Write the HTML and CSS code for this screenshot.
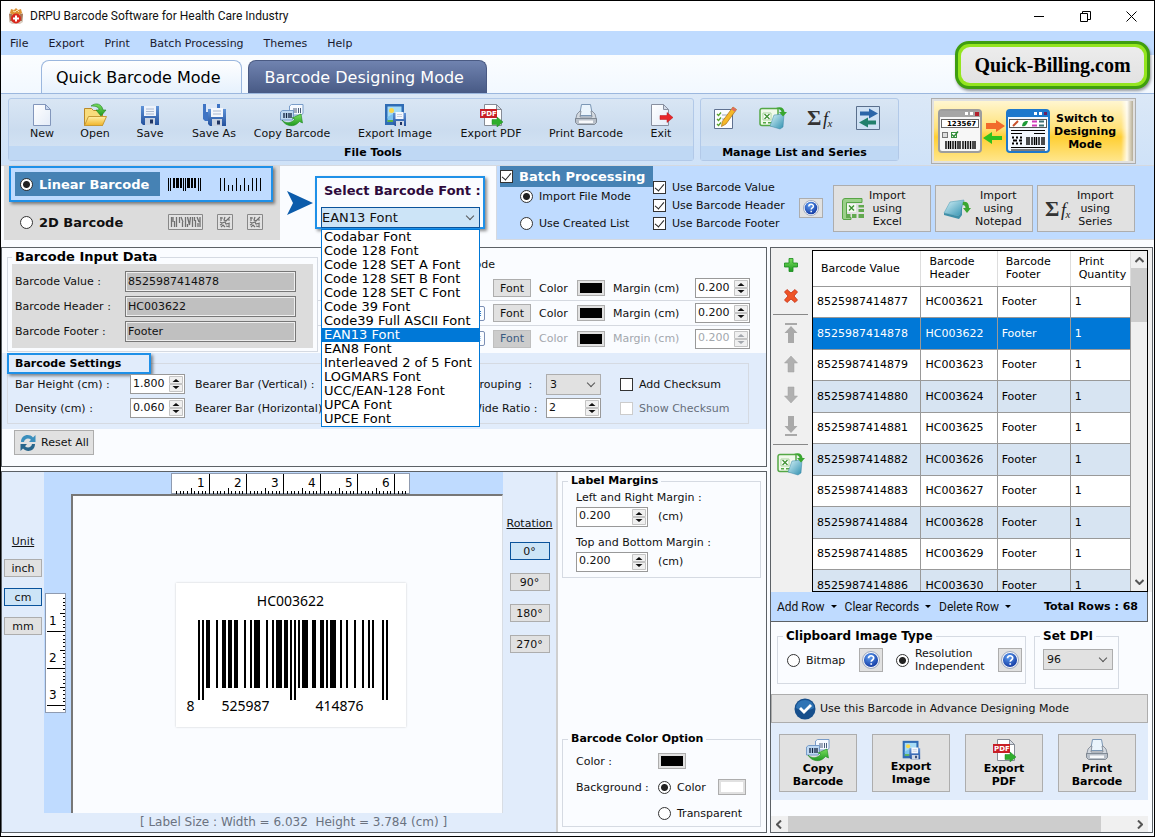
FILE: index.html
```html
<!DOCTYPE html>
<html lang="en">
<head>
    <meta charset="UTF-8">
    <meta name="viewport" content="width=device-width, initial-scale=1.0">
    <title>DRPU Barcode Software for Health Care Industry</title>
    <link rel="stylesheet" href="styles.css">
</head>
<body>
    <!-- Icon sprites -->
    <svg class="sprites" aria-hidden="true">
        <defs>
            <linearGradient id="g-blue" x1="0" y1="0" x2="0" y2="1"><stop offset="0" stop-color="#5f93d8"/><stop offset="1" stop-color="#24519c"/></linearGradient>
            <linearGradient id="g-green" x1="0" y1="0" x2="0" y2="1"><stop offset="0" stop-color="#7ade5c"/><stop offset="1" stop-color="#1f9a22"/></linearGradient>
            <linearGradient id="g-folder" x1="0" y1="0" x2="0" y2="1"><stop offset="0" stop-color="#fff0a8"/><stop offset="1" stop-color="#f0b429"/></linearGradient>
            <linearGradient id="g-page" x1="0" y1="0" x2="1" y2="1"><stop offset="0" stop-color="#ffffff"/><stop offset="1" stop-color="#e4ecf8"/></linearGradient>
            <linearGradient id="g-pad" x1="0" y1="0" x2="1" y2="1"><stop offset="0" stop-color="#d8f3f8"/><stop offset="1" stop-color="#2f90b0"/></linearGradient>
            <radialGradient id="g-help" cx=".4" cy=".3" r=".8"><stop offset="0" stop-color="#5d9cf0"/><stop offset="1" stop-color="#0b2f9a"/></radialGradient>
        </defs>
        <symbol id="i-app" viewBox="0 0 16 16">
            <path d="M1 5l2-1h10l2 1v9l-3 2H4l-3-2z" fill="#d9cfc4"/>
            <path d="M3 1l3 1 2-2 2 2 3-1 1 4-3 2H5L2 5z" fill="#dd9234"/>
            <path d="M5 3l2 1 2-2 2 2" fill="none" stroke="#fbe3b0"/>
            <path d="M1 6h3v7H2zM12 6h3l-1 7h-2z" fill="#a9795a"/>
            <circle cx="8" cy="10.500" r="5" fill="#d9261c"/>
            <path d="M7 7.500h2v2h2v2H9v2H7v-2H5v-2h2z" fill="#fff"/>
        </symbol>
        <symbol id="i-new" viewBox="0 0 24 24">
            <path d="M3.500 1.500h12l5 5v16h-17z" fill="url(#g-page)" stroke="#8296bb"/>
            <path d="M15.500 1.500v5h5z" fill="#c9d8ef" stroke="#8296bb"/>
        </symbol>
        <symbol id="i-open" viewBox="0 0 24 24">
            <path d="M1.500 5.500h7l2 2h9v15h-18z" fill="#f8dc7c" stroke="#b9892a"/>
            <path d="M5.500 13.500h18l-4 9h-18z" fill="url(#g-folder)" stroke="#c79a35"/>
            <path d="M8 3c5-4 11-2 12 4h3l-5 6-5-6h3c0-3-3-4-8-4z" fill="url(#g-green)" stroke="#1c7f1e" stroke-width=".6"/>
        </symbol>
        <symbol id="i-save" viewBox="0 0 24 24">
            <path d="M3 3h18v19H5l-2-2z" fill="url(#g-blue)"/>
            <path d="M6 3h12v10H6z" fill="#eef3fb"/>
            <path d="M8 6h8M8 8.500h8M8 11h8" stroke="#a9b8d0"/>
            <path d="M7 15h10v7H7z" fill="#c9d3e2"/>
            <path d="M12 16.500h3v4h-3z" fill="#1f3463"/>
        </symbol>
        <symbol id="i-saveas" viewBox="0 0 24 24">
            <path d="M1 1h17v17H3l-2-2z" fill="#3f74c4"/>
            <path d="M4 1h11v8H4z" fill="#dce7f7"/>
            <path d="M6 6h18v17H8l-2-2z" fill="url(#g-blue)"/>
            <path d="M9 5h12v9H9z" fill="#f4f7fc"/>
            <path d="M11 8h8M11 11h8" stroke="#a9b8d0"/>
            <path d="M10 16h10v7H10z" fill="#c9d3e2"/>
            <path d="M15 17.500h3v4h-3z" fill="#1f3463"/>
        </symbol>
        <symbol id="i-copy" viewBox="0 0 24 24">
            <path d="M9.500 3l2-1.500h11.500v9l-2 1.500h-11.500z" fill="#f5f9ff" stroke="#6c93c4" stroke-width=".9"/>
            <path d="M14 5v5M16 5v5M18.500 5v5M20.500 5v5" stroke="#4a5d7a"/>
            <path d="M.5 9l2-1.500h11v8l-1.500 1.500h-11.500z" fill="#bed8f2" stroke="#6c93c4" stroke-width=".9"/>
            <path d="M4 10v5M6.500 10v5M9 10v5M11 10v5" stroke="#12233f" stroke-width="1.300"/>
            <path d="M2 17c3 3.500 9 4 13-1l-3-1 9-4 1.500 9-3-1.500c-5 6.500-14 5-17.500-1.500z" fill="url(#g-green)" stroke="#1c8a20" stroke-width=".6"/>
        </symbol>
        <symbol id="i-image" viewBox="0 0 24 24">
            <path d="M2 1h19v21H2z" fill="#2f6cb5"/>
            <path d="M4.500 3.500h14v12h-14z" fill="#a6dcf6"/>
            <circle cx="8.500" cy="7.500" r="2.500" fill="#f9d84a"/>
            <path d="M4.500 19v-5l5-3 3 4v4z" fill="#7cc4ee"/>
            <path d="M4.500 19v-2h6v2z" fill="#5eb247"/>
            <path d="M10 10h13v13H12l-2-2z" fill="url(#g-blue)"/>
            <path d="M12.500 9h8v7h-8z" fill="#f5f8fd"/>
            <path d="M14 11.500h5M14 13.500h5" stroke="#b9c4d6" stroke-width=".8"/>
            <path d="M13 18h8v5h-8z" fill="#cfd8e6"/>
            <path d="M17 19h2v3h-2z" fill="#1f3463"/>
        </symbol>
        <symbol id="i-pdf" viewBox="0 0 24 24">
            <path d="M5.500 1.500h12l5 5v16h-17z" fill="#fff" stroke="#868c96"/>
            <path d="M17.500 1.500v5h5z" fill="#d8dde5" stroke="#868c96"/>
            <path d="M1 6h17v9H1z" fill="#c81f26"/>
            <path d="M13 16.500h5v-2.500l6 5-6 5v-2.500h-5z" fill="#2fae2c" stroke="#1b8420" stroke-width=".5"/>
        </symbol>
        <symbol id="i-print" viewBox="0 0 24 24">
            <path d="M7.500 1.500h9l2 11h-13z" fill="#eaf4fc" stroke="#7b97b5"/>
            <path d="M3 11l3-3h1l-1 6h12l-1-6h1l3 3 1.500 6H1.500z" fill="#d3d9e0" stroke="#79828e" stroke-width=".8"/>
            <path d="M1.500 15.500h21v4l-2 2h-17l-2-2z" fill="#b9c0c9" stroke="#6f7884" stroke-width=".8"/>
            <path d="M5 17.500h14v2.500H5z" fill="#f7f9fb"/>
        </symbol>
        <symbol id="i-exit" viewBox="0 0 24 24">
            <path d="M2.500 1.500h12l5 5v16h-17z" fill="url(#g-page)" stroke="#8890a0"/>
            <path d="M14.500 1.500v5h5z" fill="#d3dbe8" stroke="#8890a0"/>
            <path d="M11 12.500h7V9.500l6 5-6 5v-3h-7z" fill="#e8262a" stroke="#b51519" stroke-width=".5"/>
        </symbol>
        <symbol id="i-edit" viewBox="0 0 24 24">
            <path d="M1.500 3.500h18v19h-18z" fill="#fbfcff" stroke="#5f7190"/>
            <path d="M4 8l1.500 1.500L8 6.500M4 13l1.500 1.500L8 11.500M4 18l1.500 1.500L8 16.500" fill="none" stroke="#58a32c" stroke-width="1.300"/>
            <path d="M9 9h6M9 13h3" stroke="#9aa6ba"/>
            <path d="M20 1l3.500 2.500L13 18l-4.500 2.500.8-5z" fill="#f5b829" stroke="#a7701a" stroke-width=".7"/>
            <path d="M20 1l3.500 2.500-1.700 2.300-3.500-2.500z" fill="#e06c5e"/>
        </symbol>
        <symbol id="i-xlpad" viewBox="0 0 28 24">
            <path d="M3 2.500h16v17H3a2 2 0 0 1-2-2v-13a2 2 0 0 1 2-2z" fill="#f0f9ea" stroke="#54a845" stroke-width="1.500"/>
            <path d="M4 7h8v7H4z" fill="#fff" stroke="#8cc77d" stroke-width=".7"/>
            <path d="M5.500 8l5 5M10.500 8l-5 5" stroke="#3f9232" stroke-width="1.300"/>
            <path d="M4 16.800h3M9 16.800h4" stroke="#54a845" stroke-width="1.600"/>
            <path d="M15 9l10-1-1 13-3 2-10-3z" fill="url(#g-pad)" stroke="#3a86a5" stroke-width=".5"/>
            <path d="M17 2c5-2 8 0 8.500 4h2.500l-4 4.500-4-4.500h2.500c0-2-2-3-5.500-4z" fill="#3aa62f"/>
        </symbol>
        <symbol id="i-swap" viewBox="0 0 24 24">
            <path d="M.5.5h23v23H.5z" fill="#cfe1f4" stroke="#5a6f8c"/>
            <path d="M4 5.500h9V2.500l9 5-9 5v-3H4z" fill="#2b65a8"/>
            <path d="M20 14.500h-8v-3l-9 5 9 5v-3h8z" fill="#22806c"/>
        </symbol>
        <symbol id="i-help" viewBox="0 0 16 16">
            <circle cx="8" cy="8" r="7.500" fill="#fff" stroke="#8d9bb5" stroke-width=".8"/>
            <circle cx="8" cy="8" r="6.300" fill="url(#g-help)"/>
            <path d="M5.800 6.500c0-3 4.600-3 4.600-.2 0 1.700-2.200 1.600-2.200 3.200M8.200 10.800v1.500" fill="none" stroke="#fff" stroke-width="1.500"/>
        </symbol>
        <symbol id="i-excel" viewBox="0 0 24 24">
            <path d="M4 1.500h17v4H5.500v15H10v2H3a1.500 1.500 0 0 1-1.500-1.500V4A2.500 2.500 0 0 1 4 1.500z" fill="#9bd089" stroke="#57a546"/>
            <path d="M6 7h9v8H6z" fill="#f3faef"/>
            <path d="M8 8.500l5 5M13 8.500l-5 5" stroke="#3c8f2f" stroke-width="1.400"/>
            <path d="M5 17h4.500v4H5zM11 17h4.500v4H11zM17.500 17H23v4h-5.500zM17.500 12H23v3h-5.500zM17.500 8H23v2.500h-5.500z" fill="#62a94f"/>
        </symbol>
        <symbol id="i-notepad" viewBox="0 0 28 24">
            <path d="M7 5l14-2-4 14-2 2-14-3z" fill="url(#g-pad)" stroke="#5aa5bb" stroke-width=".6"/>
            <path d="M1 16l14 3 2-2 2-9v10l-3 4-15-4z" fill="#3f8fa8"/>
            <path d="M20 5c5-1 6 3 6 6h2l-4 5-4-5h2.500c0-2-1-3-3-3z" fill="#3aa62f"/>
        </symbol>
        <symbol id="i-reset" viewBox="0 0 18 18">
            <path d="M2 8c0-7 8-9 12-4.500L16.500 1v7H10l2-2.200C9.500 3.500 5.500 4.500 5 8z" fill="#3b8fbd"/>
            <path d="M16 10c0 7-8 9-12 4.500L1.500 17v-7H8l-2 2.200c2.500 2.300 6.500 1.300 7-2.200z" fill="#28668c"/>
        </symbol>
        <symbol id="i-plus" viewBox="0 0 16 16"><path d="M6 1.500h4V6h4.500v4H10v4.500H6V10H1.500V6H6z" fill="url(#g-green)" stroke="#168a1c" stroke-width=".8"/></symbol>
        <symbol id="i-cross" viewBox="0 0 16 16"><path d="M4 1.500L8 5l4-3.500L14.500 4 11 8l3.500 4-2.500 2.500L8 11l-4 3.500L1.500 12 5 8 1.500 4z" fill="#ef5427" stroke="#c42f14" stroke-width=".8"/></symbol>
        <symbol id="i-up" viewBox="0 0 16 20"><path d="M8 2l6.500 7h-3.500v9H5V9H1.500z" fill="#b0b0b0" stroke="#a0a0a0" stroke-width=".5"/></symbol>
        <symbol id="i-top" viewBox="0 0 16 20"><path d="M2 0h12v2H2zM8 3l6.500 7h-3.500v10H5V10H1.500z" fill="#a9a9a9"/></symbol>
        <symbol id="i-down" viewBox="0 0 16 20"><path d="M8 18l6.500-7h-3.500V2H5v9H1.500z" fill="#b0b0b0" stroke="#a0a0a0" stroke-width=".5"/></symbol>
        <symbol id="i-bottom" viewBox="0 0 16 20"><path d="M2 18h12v2H2zM8 17l6.500-7h-3.500V0H5v10H1.500z" fill="#a9a9a9"/></symbol>
        <symbol id="i-check" viewBox="0 0 22 22">
            <circle cx="11" cy="11" r="10.500" fill="#174f8c"/>
            <path d="M2 10a9 8 0 0 1 18 0c-5 3-13 3-18 0z" fill="#2f74b5"/>
            <path d="M5 11l2-2 3 3 6-6 2 2-8 8z" fill="#fff"/>
        </symbol>
        <symbol id="i-spin" viewBox="0 0 14 16">
            <path d="M.5.5h13v7H.5zM.5 8.500h13v7H.5z" fill="#f0f0f0" stroke="#c4c4c4"/>
            <path d="M7 3l3.500 3h-7zM7 13l3.500-3h-7z" fill="currentColor"/>
        </symbol>
        <symbol id="i-linear1" viewBox="0 0 34 13"><path d="M0 0h1v13H0zM2 0h1v13H2zM5 0h2v10H5zM8 0h3v10H8zM12 0h2v10h-2zM15 0h1v13h-1zM17 0h1v13h-1zM19 0h3v10h-3zM23 0h2v10h-2zM26 0h2v10h-2zM30 0h1v13h-1zM32 0h1v13h-1z" fill="#000"/></symbol>
        <symbol id="i-linear2" viewBox="0 0 42 13"><path d="M0 0h1v13H0zM4 0h1v13H4zM8 7h1v6H8zM12 7h1v6h-1zM16 0h1v13h-1zM20 7h1v6h-1zM24 0h1v13h-1zM28 7h1v6h-1zM32 0h1v13h-1zM36 0h1v13h-1zM40 0h1v13h-1z" fill="#000"/></symbol>
        <symbol id="i-pdf417" viewBox="0 0 35 16">
            <path d="M.5.5h34v15H.5z" fill="#e2e2e2" stroke="#888"/>
            <path d="M3.500 3v10M5 3v5M6.500 7v6M8.500 3v10M11.500 3v6M13 3l2 5M14.500 8v5M17.500 3v10M19.500 3l2 8 1-8M19.500 10v3M24.500 3v10M26.500 3v4M27.500 6v7M29 3l2 5M30 9v4M32 3v10" stroke="#707070" fill="none" stroke-width="1.300"/>
        </symbol>
        <symbol id="i-qr" viewBox="0 0 16 16">
            <path d="M.5.5h15v15H.5z" fill="#e2e2e2" stroke="#888"/>
            <path d="M3 4h3M4 3v4M8 3l-1 3 2 1 4-4M11 6h2M3 8l2 1 3-1 1 2 4-1M3 11l2-1M4 13l2-2 2 2M9 12l4 1M12 10v2" fill="none" stroke="#707070" stroke-width="1.200"/>
        </symbol>
        <symbol id="i-switch" viewBox="0 0 112 44">
            <rect x="1" y="1" width="42" height="42" rx="3" fill="#f7f7f7" stroke="#9d9d9d" stroke-width="2"/>
            <path d="M2 2h40v6H2z" fill="#a5a5a5"/>
            <path d="M27 3h3v3h-3zM32 3h3v3h-3z" fill="#fff"/><path d="M37 3h4v4h-4z" fill="#b3202c"/>
            <rect x="3.500" y="10.500" width="37" height="8" fill="#fff" stroke="#666"/>
            <rect x="4.500" y="23.500" width="5" height="5" fill="#ddd" stroke="#777"/>
            <rect x="13.500" y="23.500" width="5" height="5" fill="#fff" stroke="#398f3f"/>
            <path d="M14 25.500l2 2 4-5" stroke="#2a8a34" stroke-width="1.500" fill="none"/>
            <path d="M8 32v8M10.500 32v8M12.500 32v8M15 32v8M17.500 32v8M20 32v8M22 32v8M25 32v8M27.500 32v8M30 32v8M32.500 32v8M35 32v8M37 32v8" stroke="#000" stroke-width="1.400"/>
            <path d="M48 14h10v-3l9 6-9 6v-3H48z" fill="#f26a2a"/>
            <path d="M64 27H54v-4l-9 6 9 6v-4h10z" fill="#2fc01e"/>
            <rect x="69" y="1" width="42" height="42" rx="3" fill="#f2f7fd" stroke="#1e78cc" stroke-width="2"/>
            <path d="M70 2h40v6H70z" fill="#1e78cc"/>
            <path d="M96 3h3v3h-3zM101 3h3v3h-3z" fill="#fff"/><path d="M106 3h3v3h-3z" fill="#6b1e5d"/>
            <rect x="71.500" y="10.500" width="37" height="8" fill="#fff" stroke="#555"/>
            <path d="M75 17l5-5" stroke="#c8512c" stroke-width="2"/><path d="M84 17c1-5 3-5 6-5-1 4-3 6-6 5z" fill="#1e9b37"/>
            <path d="M94 12.500h5M94 16.500h5" stroke="#d13ab9" stroke-width="2"/><path d="M101 12.500h5M101 16.500h5" stroke="#3b6f72" stroke-width="2"/>
            <path d="M73 21.500h34M73 24.500h11M96 24.500h11M73 38.500h34M73 41h34" stroke="#000"/>
            <path d="M74 28.500h2M78 28.500h2M82 28.500h2M75 31.500h4M81 31.500h3M74 34.500h2M78 34.500h2M82 34.500h2" stroke="#000" stroke-width="2"/>
            <path d="M89 28v8M91 28v8M94 28v8M96.500 28v8M98.500 28v8M101 28v8M104 28v8M106 28v8" stroke="#000" stroke-width="1.400"/>
        </symbol>
    </svg>

    <div class="window">
        <!-- Title bar -->
        <header class="title-bar">
            <svg class="icon-16"><use href="#i-app"/></svg>
            <span class="title">DRPU Barcode Software for Health Care Industry</span>
            <button class="win-btn" aria-label="Minimize"><svg width="11" height="11"><path d="M0 5.500h10" stroke="#000"/></svg></button>
            <button class="win-btn" aria-label="Restore"><svg width="11" height="11"><path d="M.5 2.500h7v8h-7zM2.500 2.500v-2h8v8h-3" stroke="#000" fill="none"/></svg></button>
            <button class="win-btn" aria-label="Close"><svg width="11" height="11"><path d="M.5.5l10 10M10.500.5l-10 10" stroke="#000"/></svg></button>
        </header>

        <!-- Menu -->
        <nav class="menu-bar">
            <a href="#">File</a>
            <a href="#">Export</a>
            <a href="#">Print</a>
            <a href="#">Batch Processing</a>
            <a href="#">Themes</a>
            <a href="#">Help</a>
        </nav>
        <div class="site-badge"><span>Quick-Billing.com</span></div>

        <!-- Mode tabs -->
        <div class="tabs">
            <button class="tab active">Quick Barcode Mode</button>
            <button class="tab">Barcode Designing Mode</button>
        </div>

        <!-- Ribbon -->
        <div class="ribbon">
            <section class="group file-tools">
                <div class="tools">
                    <button class="tool"><svg class="icon-24"><use href="#i-new"/></svg>New</button>
                    <button class="tool"><svg class="icon-24"><use href="#i-open"/></svg>Open</button>
                    <button class="tool"><svg class="icon-24"><use href="#i-save"/></svg>Save</button>
                    <button class="tool"><svg class="icon-24"><use href="#i-saveas"/></svg>Save As</button>
                    <button class="tool"><svg class="icon-24"><use href="#i-copy"/></svg>Copy Barcode</button>
                    <button class="tool"><svg class="icon-24"><use href="#i-image"/></svg>Export Image</button>
                    <button class="tool"><svg class="icon-24"><use href="#i-pdf"/><text x="2" y="13" class="pdf-text">PDF</text></svg>Export PDF</button>
                    <button class="tool"><svg class="icon-24"><use href="#i-print"/></svg>Print Barcode</button>
                    <button class="tool"><svg class="icon-24"><use href="#i-exit"/></svg>Exit</button>
                </div>
                <h2 class="group-title">File Tools</h2>
            </section>
            <section class="group list-tools">
                <div class="tools">
                    <button class="tool" aria-label="Edit list"><svg class="icon-24"><use href="#i-edit"/></svg></button>
                    <button class="tool" aria-label="Import list"><svg class="icon-28"><use href="#i-xlpad"/></svg></button>
                    <button class="tool" aria-label="Series"><svg class="icon-28"><text x="1" y="19" class="sigma">Σ</text><text x="17" y="19" class="fx">fₓ</text></svg></button>
                    <button class="tool" aria-label="Swap"><svg class="icon-24"><use href="#i-swap"/></svg></button>
                </div>
                <h2 class="group-title">Manage List and Series</h2>
            </section>
            <button class="switch-btn">
                <span class="switch-face">
                    <svg class="switch-icon"><use href="#i-switch"/><text x="9" y="17" class="mini-text">123567</text></svg>
                    <span>Switch to<br>Designing<br>Mode</span>
                </span>
            </button>
        </div>

        <!-- Barcode type, font and batch options -->
        <div class="options">
            <div class="barcode-type">
                <div class="type-row selected">
                    <label class="type-label"><input type="radio" name="type" checked>Linear Barcode</label>
                    <svg width="34" height="13"><use href="#i-linear1"/></svg>
                    <svg width="42" height="13"><use href="#i-linear2"/></svg>
                </div>
                <div class="type-row">
                    <label class="type-label"><input type="radio" name="type">2D Barcode</label>
                    <svg width="35" height="16"><use href="#i-pdf417"/></svg>
                    <svg width="16" height="16"><use href="#i-qr"/></svg>
                    <svg width="16" height="16"><use href="#i-qr"/></svg>
                </div>
            </div>

            <div class="font-choice">
                <svg width="26" height="24" viewBox="0 0 26 24"><path d="M0 0l26 12L0 24l6-12z" fill="#0c5cab"/></svg>
                <div class="font-box">
                    <label for="font-select">Select Barcode Font :</label>
                    <span class="select-wrap">
                        <select id="font-select" class="open"><option>EAN13 Font</option></select>
                    </span>
                    <ul class="font-list" role="listbox">
                        <li>Codabar Font</li>
                        <li>Code 128 Font</li>
                        <li>Code 128 SET A Font</li>
                        <li>Code 128 SET B Font</li>
                        <li>Code 128 SET C Font</li>
                        <li>Code 39 Font</li>
                        <li>Code39 Full ASCII Font</li>
                        <li class="current">EAN13 Font</li>
                        <li>EAN8 Font</li>
                        <li>Interleaved 2 of 5 Font</li>
                        <li>LOGMARS Font</li>
                        <li>UCC/EAN-128 Font</li>
                        <li>UPCA Font</li>
                        <li>UPCE Font</li>
                    </ul>
                </div>
            </div>

            <div class="batch">
                <div class="batch-mode">
                    <label class="batch-title"><input type="checkbox" checked>Batch Processing</label>
                    <label class="mode"><input type="radio" name="mode" checked>Import File Mode</label>
                    <label class="mode"><input type="radio" name="mode">Use Created List</label>
                </div>
                <div class="batch-use">
                    <label><input type="checkbox" checked>Use Barcode Value</label>
                    <label><input type="checkbox" checked>Use Barcode Header</label>
                    <label><input type="checkbox" checked>Use Barcode Footer</label>
                </div>
                <button class="btn help-btn" aria-label="Help"><svg class="icon-16"><use href="#i-help"/></svg></button>
                <div class="imports">
                    <button class="btn import-btn"><svg class="icon-24"><use href="#i-excel"/></svg><span>Import<br>using<br>Excel</span></button>
                    <button class="btn import-btn"><svg class="icon-28"><use href="#i-notepad"/></svg><span>Import<br>using<br>Notepad</span></button>
                    <button class="btn import-btn"><svg class="icon-28"><text x="0" y="19" class="sigma">Σ</text><text x="16" y="19" class="fx">fₓ</text></svg><span>Import<br>using<br>Series</span></button>
                </div>
            </div>
        </div>

        <main class="workspace">
            <div class="left">
                <section class="panel data-panel">
                    <div class="data-top">
                        <fieldset class="input-data">
                            <legend class="big">Barcode Input Data</legend>
                            <div class="fields">
                                <label for="val">Barcode Value :</label><input id="val" type="text" value="8525987414878">
                                <label for="head">Barcode Header :</label><input id="head" type="text" value="HC003622">
                                <label for="foot">Barcode Footer :</label><input id="foot" type="text" value="Footer">
                            </div>
                        </fieldset>
                        <div class="text-styles">
                            <div class="style-title">Barcode</div>
                            <div class="style-row">
                                <span></span>
                                <button class="btn">Font</button><label for="c1">Color</label><button class="swatch" id="c1"><i></i></button>
                                <label for="m1">Margin (cm)</label><span class="spinner"><input id="m1" type="text" value="0.200"><svg><use href="#i-spin"/></svg></span>
                            </div>
                            <div class="style-row">
                                <button class="align-btn" aria-label="Alignment">≡</button>
                                <button class="btn">Font</button><label for="c2">Color</label><button class="swatch" id="c2"><i></i></button>
                                <label for="m2">Margin (cm)</label><span class="spinner"><input id="m2" type="text" value="0.200"><svg><use href="#i-spin"/></svg></span>
                            </div>
                            <div class="style-row disabled">
                                <button class="align-btn" aria-label="Alignment">≡</button>
                                <button class="btn">Font</button><label for="c3">Color</label><button class="swatch" id="c3"><i></i></button>
                                <label for="m3">Margin (cm)</label><span class="spinner"><input id="m3" type="text" value="0.200"><svg><use href="#i-spin"/></svg></span>
                            </div>
                        </div>
                    </div>
                    <div class="settings">
                        <fieldset>
                            <legend class="marked">Barcode Settings</legend>
                            <div class="settings-grid">
                                <label for="bh">Bar Height (cm) :</label>
                                <span class="spinner"><input id="bh" type="text" value="1.800"><svg><use href="#i-spin"/></svg></span>
                                <span>Bearer Bar (Vertical) :</span>
                                <label for="grp">Grouping &nbsp;:</label>
                                <span class="select-wrap"><select id="grp"><option>3</option></select></span>
                                <label><input type="checkbox">Add Checksum</label>
                                <label for="den">Density (cm) :</label>
                                <span class="spinner"><input id="den" type="text" value="0.060"><svg><use href="#i-spin"/></svg></span>
                                <span>Bearer Bar (Horizontal) :</span>
                                <label for="wr">Wide Ratio :</label>
                                <span class="spinner"><input id="wr" type="text" value="2"><svg><use href="#i-spin"/></svg></span>
                                <label class="muted"><input type="checkbox" disabled>Show Checksum</label>
                            </div>
                        </fieldset>
                    </div>
                    <button class="btn reset-btn"><svg width="18" height="18"><use href="#i-reset"/></svg>Reset All</button>
                </section>

                <section class="panel design-panel">
                    <div class="units">
                        <u>Unit</u>
                        <button class="btn">inch</button>
                        <button class="btn on">cm</button>
                        <button class="btn">mm</button>
                    </div>
                    <div class="stage">
                        <div class="ruler-top">
                            <svg width="239" height="21">
                                <defs>
                                    <pattern id="ticks-h" x="1" y="0" width="37" height="21" patternUnits="userSpaceOnUse">
                                        <path d="M4 18v3M8 18v3M11 18v3M15 18v3M19 15v6M22 18v3M26 18v3M30 18v3M33 18v3" transform="translate(.5 0)" stroke="#000"/>
                                        <path d="M0.500 1v20" stroke="#000"/>
                                    </pattern>
                                </defs>
                                <rect x=".5" y=".5" width="238" height="20" fill="#fff" stroke="#8f9bb0"/>
                                <rect x="2" y="0" width="236" height="21" fill="url(#ticks-h)"/>
                                <g class="ruler-text"><text x="26" y="14">1</text><text x="63" y="14">2</text><text x="100" y="14">3</text><text x="137" y="14">4</text><text x="174" y="14">5</text><text x="211" y="14">6</text></g>
                            </svg>
                        </div>
                        <div class="ruler-side">
                            <svg width="21" height="120">
                                <defs>
                                    <pattern id="ticks-v" x="0" y="1" width="21" height="37" patternUnits="userSpaceOnUse">
                                        <path d="M18 4h3M18 8h3M18 11h3M18 15h3M15 19h6M18 22h3M18 26h3M18 30h3M18 33h3" transform="translate(0 .5)" stroke="#000"/>
                                        <path d="M2 .5h19" stroke="#000"/>
                                    </pattern>
                                </defs>
                                <rect x=".5" y=".5" width="20" height="119" fill="#fff" stroke="#8f9bb0"/>
                                <rect x="0" y="2" width="20" height="117" fill="url(#ticks-v)"/>
                                <g class="ruler-text"><text x="4" y="32">1</text><text x="4" y="69">2</text><text x="4" y="106">3</text></g>
                            </svg>
                        </div>
                        <div class="canvas">
                            <div class="label-card">
                                <div class="label-head">HC003622</div>
                                <svg id="barcode" class="bars" width="190" height="80" role="img" aria-label="8525987414876"></svg>
                                <div class="digits"><span>8</span><span>525987</span><span>414876</span></div>
                            </div>
                        </div>
                        <div class="label-size">[ Label Size : Width = 6.032 &nbsp;Height = 3.784 (cm) ]</div>
                    </div>
                    <div class="rotation">
                        <u>Rotation</u>
                        <button class="btn on">0°</button>
                        <button class="btn">90°</button>
                        <button class="btn">180°</button>
                        <button class="btn">270°</button>
                    </div>
                    <div class="label-options">
                        <fieldset>
                            <legend>Label Margins</legend>
                            <div class="margins">
                                <label for="lr">Left and Right Margin :</label>
                                <div class="margin-row"><span class="spinner"><input id="lr" type="text" value="0.200"><svg><use href="#i-spin"/></svg></span>(cm)</div>
                                <label for="tb">Top and Bottom Margin :</label>
                                <div class="margin-row"><span class="spinner"><input id="tb" type="text" value="0.200"><svg><use href="#i-spin"/></svg></span>(cm)</div>
                            </div>
                        </fieldset>
                        <fieldset>
                            <legend>Barcode Color Option</legend>
                            <div class="color-grid">
                                <label for="bc">Color :</label>
                                <button class="swatch" id="bc"><i></i></button>
                                <span></span>
                                <span>Background :</span>
                                <label><input type="radio" name="bg" checked>Color</label>
                                <button class="swatch white" aria-label="Background color"><i></i></button>
                                <span></span>
                                <label class="wide"><input type="radio" name="bg">Transparent</label>
                            </div>
                        </fieldset>
                    </div>
                </section>
            </div>

            <section class="panel list-panel">
                <div class="list-area">
                    <div class="list-tools-side">
                        <button aria-label="Add"><svg width="16" height="16"><use href="#i-plus"/></svg></button>
                        <button aria-label="Delete"><svg width="16" height="16"><use href="#i-cross"/></svg></button>
                        <hr>
                        <button aria-label="Move to top"><svg width="16" height="20"><use href="#i-top"/></svg></button>
                        <button aria-label="Move up"><svg width="16" height="20"><use href="#i-up"/></svg></button>
                        <button aria-label="Move down"><svg width="16" height="20"><use href="#i-down"/></svg></button>
                        <button aria-label="Move to bottom"><svg width="16" height="20"><use href="#i-bottom"/></svg></button>
                        <hr>
                        <button aria-label="Import list"><svg class="icon-28"><use href="#i-xlpad"/></svg></button>
                    </div>
                    <div class="table-box">
                        <div class="table-clip">
                            <table>
                                <thead>
                                    <tr><th>Barcode Value</th><th>Barcode Header</th><th>Barcode Footer</th><th>Print Quantity</th></tr>
                                </thead>
                                <tbody>
                                    <tr><td>8525987414877</td><td>HC003621</td><td>Footer</td><td>1</td></tr>
                                    <tr class="selected"><td>8525987414878</td><td>HC003622</td><td>Footer</td><td>1</td></tr>
                                    <tr><td>8525987414879</td><td>HC003623</td><td>Footer</td><td>1</td></tr>
                                    <tr><td>8525987414880</td><td>HC003624</td><td>Footer</td><td>1</td></tr>
                                    <tr><td>8525987414881</td><td>HC003625</td><td>Footer</td><td>1</td></tr>
                                    <tr><td>8525987414882</td><td>HC003626</td><td>Footer</td><td>1</td></tr>
                                    <tr><td>8525987414883</td><td>HC003627</td><td>Footer</td><td>1</td></tr>
                                    <tr><td>8525987414884</td><td>HC003628</td><td>Footer</td><td>1</td></tr>
                                    <tr><td>8525987414885</td><td>HC003629</td><td>Footer</td><td>1</td></tr>
                                    <tr><td>8525987414886</td><td>HC003630</td><td>Footer</td><td>1</td></tr>
                                </tbody>
                            </table>
                        </div>
                        <div class="scroll-v">
                            <svg width="9" height="6"><path d="M.5 5l4-4 4 4" fill="none" stroke="#555" stroke-width="2"/></svg>
                            <span class="thumb"></span>
                            <svg width="9" height="6"><path d="M.5 1l4 4 4-4" fill="none" stroke="#555" stroke-width="2"/></svg>
                        </div>
                    </div>
                </div>
                <div class="row-bar">
                    <button class="row-menu">Add Row</button>
                    <button class="row-menu">Clear Records</button>
                    <button class="row-menu">Delete Row</button>
                    <span class="total">Total Rows : 68</span>
                </div>
                <div class="output-options">
                    <fieldset class="clip-type">
                        <legend class="mid">Clipboard Image Type</legend>
                        <div class="clip-row">
                            <label><input type="radio" name="clip">Bitmap</label>
                            <button class="btn help-btn" aria-label="Bitmap help"><svg width="18" height="18"><use href="#i-help"/></svg></button>
                            <label><input type="radio" name="clip" checked><span>Resolution<br>Independent</span></label>
                            <button class="btn help-btn" aria-label="Resolution help"><svg width="18" height="18"><use href="#i-help"/></svg></button>
                        </div>
                    </fieldset>
                    <fieldset class="dpi">
                        <legend class="mid">Set DPI</legend>
                        <span class="select-wrap"><select aria-label="Set DPI"><option>96</option></select></span>
                    </fieldset>
                </div>
                <button class="btn advance-btn"><svg width="22" height="22"><use href="#i-check"/></svg>Use this Barcode in Advance Designing Mode</button>
                <div class="output-buttons">
                    <button class="btn out-btn"><svg class="icon-24"><use href="#i-copy"/></svg>Copy<br>Barcode</button>
                    <button class="btn out-btn"><svg class="icon-20"><use href="#i-image"/></svg>Export<br>Image</button>
                    <button class="btn out-btn"><svg class="icon-24"><use href="#i-pdf"/><text x="2" y="13" class="pdf-text">PDF</text></svg>Export<br>PDF</button>
                    <button class="btn out-btn"><svg class="icon-24"><use href="#i-print"/></svg>Print<br>Barcode</button>
                </div>
                <div class="scroll-h">
                    <svg width="6" height="9"><path d="M5 .5l-4 4 4 4" fill="none" stroke="#555" stroke-width="2"/></svg>
                    <span class="thumb"></span>
                    <svg width="6" height="9"><path d="M1 .5l4 4-4 4" fill="none" stroke="#555" stroke-width="2"/></svg>
                </div>
            </section>
        </main>
    </div>

    <script src="barcode.js"></script>
</body>
</html>
```

FILE: styles.css
```css
* {
    box-sizing: border-box;
}

body {
    margin: 0;
    font-family: Verdana, "DejaVu Sans", sans-serif;
    font-size: 11px;
    line-height: 13px;
    color: #111;
}

button, input, select {
    font: inherit;
    color: inherit;
    margin: 0;
}

button {
    padding: 0;
    border: none;
    background: none;
    cursor: pointer;
}

svg {
    display: block;
    flex: none;
}

fieldset {
    margin: 0;
    padding: 0;
    border: 1px solid #d5dae2;
    min-width: 0;
}

legend {
    padding: 0 3px;
    margin-left: 5px;
    font-weight: bold;
    line-height: 14px;
    color: #000;
}

legend.mid {
    font-size: 12px;
}

legend.big {
    margin-left: 0;
    font-size: 13px;
}

.sprites {
    position: absolute;
    width: 0;
    height: 0;
}

.icon-16 { width: 16px; height: 16px; }
.icon-20 { width: 20px; height: 20px; }
.icon-24 { width: 24px; height: 24px; }
.icon-28 { width: 28px; height: 24px; }

.pdf-text {
    font: bold 7px "DejaVu Sans", sans-serif;
    fill: #fff;
}

.mini-text {
    font: bold 7px "DejaVu Sans", sans-serif;
}

.sigma {
    font: bold 22px "Liberation Serif", serif;
    fill: #333;
}

.fx {
    font: italic 18px "Liberation Serif", "DejaVu Serif", serif;
    fill: #222;
}

.window {
    position: relative;
    display: flex;
    flex-direction: column;
    height: 100vh;
    border: 1px solid #000;
    background: #fafcff;
    padding-bottom: 3px;
}

/* Form controls */
input[type="radio"], input[type="checkbox"] {
    appearance: none;
    position: relative;
    flex: none;
    width: 13px;
    height: 13px;
    border: 1px solid #333;
    background: #fff;
}

input[type="radio"] {
    border-radius: 50%;
}

input[type="radio"]:checked {
    background: radial-gradient(circle, #222 3px, #fff 4px);
}

input[type="checkbox"]:checked::after {
    content: "";
    position: absolute;
    left: 3px;
    top: 0;
    width: 4px;
    height: 8px;
    border: solid #222;
    border-width: 0 1px 1px 0;
    transform: rotate(40deg);
}

input[type="checkbox"]:disabled {
    border-color: #ccc;
}

label {
    display: flex;
    align-items: center;
    gap: 6px;
    white-space: nowrap;
}

.btn {
    display: flex;
    align-items: center;
    justify-content: center;
    background: #e1e1e1;
    border: 1px solid #adadad;
}

.btn.on {
    background: #cce4f7;
    border-color: #0a539b;
}

.spinner {
    display: flex;
    width: 55px;
    height: 20px;
    padding: 1px;
    border: 1px solid #999;
    background: #fff;
}

.spinner input {
    flex: 1;
    width: 0;
    padding: 0 0 2px 1px;
    border: none;
    background: none;
    outline: none;
}

.spinner svg {
    width: 14px;
    height: 16px;
}

.select-wrap {
    position: relative;
    display: block;
}

.select-wrap::after {
    content: "";
    position: absolute;
    right: 7px;
    top: 6px;
    width: 5px;
    height: 5px;
    border: solid #555;
    border-width: 0 1px 1px 0;
    transform: rotate(45deg);
}

select {
    appearance: none;
    display: block;
    width: 100%;
    height: 21px;
    padding: 0 3px;
    border: 1px solid #adadad;
    border-radius: 0;
    background: #e1e1e1;
}

select.open {
    padding: 0;
    font-size: 13px;
    border-color: #0a539b;
    background: #cce4f7;
}

.swatch {
    width: 28px;
    height: 16px;
    padding: 2px;
    border: 1px solid #adadad;
    background: #e1e1e1;
}

.swatch i {
    display: block;
    height: 100%;
    background: #000;
}

.swatch.white i {
    background: #fff;
}

/* Title bar and menu */
.title-bar {
    display: flex;
    align-items: center;
    height: 30px;
    padding-left: 7px;
    background: #fff;
}

.title {
    flex: 1;
    margin-left: 6px;
    font: 12px "Segoe UI", Roboto, sans-serif;
}

.win-btn {
    width: 46px;
    height: 30px;
    display: flex;
    align-items: center;
    justify-content: center;
}

.menu-bar {
    display: flex;
    align-items: center;
    gap: 20px;
    height: 24px;
    padding-left: 9px;
    background: #bfdbff;
}

.menu-bar a {
    color: #1a1a2e;
    text-decoration: none;
}

.site-badge {
    position: absolute;
    top: 40px;
    right: 4px;
    padding: 3px;
    border: 3px solid #3f9e10;
    border-radius: 14px;
    background: #94e51f;
    box-shadow: 1px 2px 3px rgba(0, 0, 0, 0.4);
}

.site-badge span {
    display: block;
    width: 183px;
    border-radius: 9px;
    background: linear-gradient(#ececec, #e2e2e2);
    font: bold 20px/36px "Liberation Serif", serif;
    text-align: center;
    color: #000;
}

.tabs {
    display: flex;
    align-items: flex-end;
    gap: 6px;
    height: 38px;
    padding-left: 40px;
    background: linear-gradient(#fbfdff, #f2f8ff);
}

.tab {
    height: 33px;
    padding: 0 22px 0 16px;
    border: 1px solid #4a5a83;
    border-bottom: none;
    border-radius: 8px 8px 0 0;
    background: linear-gradient(#7083b0, #485a85);
    font-size: 16px;
    color: #fff;
}

.tab.active {
    padding: 0 20px 0 14px;
    border-color: #9bb7de;
    background: linear-gradient(#fff, #e6f1fd);
    color: #000;
}

/* Ribbon */
.ribbon {
    display: flex;
    align-items: flex-start;
    height: 72px;
    padding: 4px 18px 0 7px;
    border-top: 1px solid #9bb7de;
    background: linear-gradient(#dbe8f7, #cfe2f8);
}

.group {
    display: flex;
    flex-direction: column;
    height: 63px;
    border: 1px solid #b2c9e8;
    border-radius: 3px;
    background: linear-gradient(#d9e6f4, #cbdcef 50%, #d6e5f5);
}

.file-tools {
    width: 686px;
    margin-right: 6px;
}

.list-tools {
    width: 199px;
}

.tools {
    flex: 1;
    display: grid;
}

.file-tools .tools {
    grid-template-columns: 52px 54px 56px 72px 84px 122px 70px 120px 30px;
    padding: 4px 0 0 7px;
}

.list-tools .tools {
    grid-template-columns: repeat(4, 1fr);
    align-items: center;
    padding: 0 6px 10px 0;
}

.tool {
    display: flex;
    flex-direction: column;
    align-items: center;
    white-space: nowrap;
    line-height: 14px;
}

.group-title {
    height: 14px;
    margin: 0;
    background: #bfd8f4;
    font-size: 11px;
    line-height: 14px;
    text-align: center;
    color: #000;
}

.file-tools .group-title {
    padding-left: 44px;
}

.list-tools .group-title {
    padding-right: 10px;
}

.switch-btn {
    margin-left: auto;
    height: 66px;
    padding: 2px;
    border: 1px solid #adadad;
    background: #e1e1e1;
}

.switch-face {
    display: flex;
    align-items: center;
    gap: 4px;
    height: 60px;
    width: 199px;
    padding: 0 0 0 4px;
    background: linear-gradient(90deg, rgba(255, 255, 255, 0) 94%, rgba(255, 255, 255, 0.8) 97%, #b5ad98), linear-gradient(#fff6d0, #ffe27a 45%, #ffcf33 60%, #ffe68c);
    font-weight: bold;
    color: #000;
}

.switch-icon {
    width: 112px;
    height: 44px;
}

/* Options strip */
.options {
    display: flex;
    height: 75px;
    margin-bottom: 7px;
    border-top: 1px solid #d5d9e0;
}

.barcode-type {
    width: 276px;
    margin-left: 3px;
    padding-left: 5px;
    background: #dcdcdc;
}

.type-row {
    display: flex;
    align-items: center;
    gap: 14px;
    width: 264px;
    height: 36px;
    border: 2px solid transparent;
    padding-left: 4px;
}

.type-row.selected {
    gap: 18px;
    border-color: #1e90e8;
    background: #bfdbff;
    box-shadow: 2px 2px 3px rgba(0, 0, 0, 0.45);
}

.type-row.selected .type-label {
    width: 145px;
    margin-right: -10px;
    background: #4682b4;
    color: #fff;
}

.type-label {
    width: 139px;
    height: 24px;
    padding-left: 5px;
    font-size: 13px;
    font-weight: bold;
}

.type-row:last-child {
    height: 40px;
}

.font-choice {
    display: flex;
    width: 216px;
    padding: 10px 0 0 7px;
    gap: 2px;
}

.font-choice > svg {
    margin-top: 15px;
}

.font-box {
    position: relative;
    width: 170px;
    height: 53px;
    padding: 0 3px 0 4px;
    border: 2px solid #1e90e8;
    box-shadow: 2px 2px 3px rgba(0, 0, 0, 0.45);
}

.font-box label {
    height: 24px;
    margin-bottom: 5px;
    padding-left: 3px;
    font-size: 13px;
    font-weight: bold;
    color: #2d0a3c;
}

.font-list {
    position: absolute;
    left: 4px;
    right: 3px;
    top: 51px;
    z-index: 5;
    margin: 0;
    padding: 0;
    list-style: none;
    background: #fff;
    border: 1px solid #0078d7;
    font-size: 13px;
    line-height: 14px;
    color: #000;
}

.font-list li {
    padding-left: 2px;
    white-space: nowrap;
    overflow: hidden;
}

.font-list .current {
    background: #0078d7;
    color: #fff;
}

.batch {
    flex: 1;
    display: flex;
    align-items: flex-end;
    padding: 0 19px 7px 3px;
    border-left: 1px solid #d5d9e0;
    border-bottom: 1px solid #d5d9e0;
    background: #bfdbff;
}

.batch-mode {
    display: flex;
    flex-direction: column;
    width: 153px;
}

.batch-title {
    height: 21px;
    background: #4682b4;
    font-size: 13px;
    font-weight: bold;
    color: #fff;
}

.mode {
    height: 18px;
    margin-left: 20px;
}

.mode + .mode {
    margin-top: 9px;
}

.batch-use {
    width: 146px;
}

.batch-use label {
    height: 18px;
}

.help-btn {
    width: 24px;
    height: 24px;
}

.batch .help-btn {
    height: 20px;
    margin-bottom: 14px;
}

.imports {
    display: flex;
    gap: 4px;
    margin-left: auto;
}

.import-btn {
    justify-content: flex-start;
    width: 98px;
    height: 47px;
    padding-left: 7px;
    gap: 4px;
}

/* Workspace */
.workspace {
    flex: 1;
    min-height: 0;
    display: grid;
    grid-template-columns: minmax(0, 2fr) minmax(0, 1fr);
    gap: 3px;
    padding-right: 1px;
}

.left {
    display: flex;
    flex-direction: column;
    gap: 4px;
    min-height: 0;
}

.panel {
    border: 1px solid #5c6166;
    background: #fafcff;
}

.data-panel {
    padding: 2px 0 11px;
}

.data-top {
    display: flex;
    margin-bottom: 1px;
}

.input-data {
    width: 311px;
    margin-left: 5px;
    padding: 0 4px 3px;
}

.fields {
    display: grid;
    grid-template-columns: 110px 171px;
    grid-auto-rows: 25px;
    align-items: center;
    padding: 5px 3px 4px;
    background: #dcdcdc;
}

.fields input {
    height: 21px;
    padding: 0 2px;
    border: 1px solid #777;
    outline: 1px solid #eee;
    outline-offset: -2px;
    background: #c0c0c0;
}

.text-styles {
    flex: 1;
    padding-right: 16px;
}

.style-title {
    width: 177px;
    height: 26px;
    line-height: 30px;
    text-align: right;
}

.style-row {
    display: grid;
    grid-template-columns: 16px 38px 30px 28px 74px 55px;
    gap: 8px;
    justify-content: end;
    align-items: center;
    height: 25px;
    border-bottom: 1px solid #d5d9e0;
}

.style-row:last-child {
    border: none;
}

.style-row .btn {
    height: 18px;
}

.align-btn {
    height: 15px;
    border: 1px solid #7b8fb5;
    border-radius: 2px;
}

.disabled {
    color: #a3a7ad;
}

.disabled .btn {
    background: #ccc;
    border-color: #bfbfbf;
    color: #3a5a80;
}

.settings {
    padding: 0 17px 5px 5px;
    background: #e1ecfb;
}

.settings fieldset {
    padding: 0 0 5px 7px;
}

.marked {
    width: 144px;
    height: 21px;
    margin-left: -8px;
    padding: 0 6px;
    border: 2px solid #1e90e8;
    line-height: 17px;
    box-shadow: 2px 2px 3px rgba(0, 0, 0, 0.45);
}

.settings-grid {
    display: grid;
    grid-template-columns: 115px 65px 1fr 75px 74px 128px;
    grid-auto-rows: 20px;
    row-gap: 4px;
    align-items: center;
    white-space: nowrap;
}

.settings-grid .select-wrap {
    width: 55px;
}

.muted {
    color: #666e7a;
}

.reset-btn {
    width: 80px;
    height: 25px;
    gap: 4px;
    margin: 1px 0 0 12px;
}

/* Label designer */
.design-panel {
    flex: 1;
    min-height: 0;
    display: flex;
}

.units, .rotation {
    display: flex;
    flex-direction: column;
    align-items: center;
    background: #e1ecfb;
}

.units {
    width: 42px;
    padding-top: 63px;
    gap: 11px;
}

.units .btn {
    width: 38px;
    height: 18px;
}

.rotation {
    width: 55px;
    padding-top: 46px;
    gap: 13px;
    border-right: 2px solid #cfcfcf;
}

.rotation u {
    line-height: 11px;
}

.rotation .btn {
    width: 40px;
    height: 18px;
}

.stage {
    flex: 1;
    display: grid;
    grid-template-columns: 27px 1fr;
    grid-template-rows: 22px 1fr 19px;
    background: #bfdbff;
}

.ruler-top {
    grid-column: 2;
    justify-self: center;
    padding: 1px 0 0 7px;
}

.ruler-side {
    grid-row: 2;
    padding: 99px 0 0 1px;
}

.ruler-text {
    font-size: 12px;
}

.canvas {
    grid-row: 2;
    grid-column: 2;
    display: flex;
    align-items: flex-start;
    justify-content: center;
    padding: 87px 0 0 6px;
    border-top: 2px solid #777;
    border-left: 2px solid #777;
    border-right: 1px solid #d8dde4;
    background: #fafcff;
}

.label-card {
    width: 230px;
    height: 144px;
    padding-top: 8px;
    background: #fff;
    box-shadow: 0 0 2px rgba(0, 0, 0, 0.2);
    font: 14px/20px "Segoe UI", "Noto Sans", sans-serif;
    color: #000;
}

.label-head {
    text-align: center;
}

.bars {
    margin: 9px 0 0 22px;
}

.digits {
    display: grid;
    grid-template-columns: 14px 96px 92px;
    padding-left: 8px;
    margin-top: -4px;
    text-align: center;
}

.label-size {
    grid-column: 1 / -1;
    background: #e1ecfb;
    font-size: 12px;
    line-height: 19px;
    padding-left: 40px;
    text-align: center;
    color: #6a7280;
}

.label-options {
    display: flex;
    flex-direction: column;
    justify-content: space-between;
    width: 208px;
    padding: 2px 5px 5px 4px;
}

.margins {
    padding: 3px 0 3px 13px;
}

.margin-row {
    display: flex;
    align-items: center;
    gap: 10px;
    height: 25px;
}

.margin-row + label {
    margin-top: 7px;
}

.margin-row .spinner {
    width: 72px;
}

.color-grid {
    display: grid;
    grid-template-columns: 82px 60px 28px;
    grid-auto-rows: 26px;
    align-items: center;
    padding: 2px 0 0 13px;
}

.color-grid .wide {
    grid-column: span 2;
}

/* Record list */
.list-panel {
    display: flex;
    flex-direction: column;
    min-height: 0;
}

.list-area {
    flex: 1;
    min-height: 0;
    display: flex;
    padding: 2px 4px 0 0;
    background: #f0f0f0;
}

.list-tools-side {
    display: flex;
    flex-direction: column;
    align-items: center;
    width: 41px;
    padding: 7px 4px 0 2px;
    gap: 11px;
}

.list-tools-side button:nth-child(2) {
    margin-top: 4px;
}

.list-tools-side hr {
    width: 100%;
    margin: 0;
    border: none;
    border-top: 1px solid #888;
}

.list-tools-side hr:nth-of-type(1) {
    margin: -1px 0 -3px;
}

.list-tools-side hr:nth-of-type(2) {
    margin: -3px 0 -4px;
}

.table-box {
    flex: 1;
    display: flex;
    min-height: 0;
    border: 1px solid #000;
    background: #fff;
}

.table-clip {
    flex: 1;
    overflow: hidden;
}

table {
    width: 100%;
    border-collapse: collapse;
    table-layout: fixed;
    color: #000;
}

th, td {
    padding: 0 4px;
    border-right: 1px solid #999;
    border-bottom: 1px solid #999;
    text-align: left;
    font-weight: normal;
}

th {
    height: 35px;
    padding: 0 0 0 8px;
    border-right-color: #ddd;
}

th:nth-child(1) { width: 34%; }
th:nth-child(2) { width: 24%; }
th:nth-child(3) { width: 23%; }

td {
    height: 31px;
}

tbody tr:nth-child(even) {
    background: #d7e4f2;
}

tbody tr:nth-child(even) td {
    height: 32px;
}

tbody tr.selected {
    background: #0078d7;
    color: #fff;
}

.scroll-v {
    display: flex;
    flex-direction: column;
    align-items: center;
    width: 16px;
    padding: 6px 0;
    background: #f0f0f0;
}

.scroll-v .thumb {
    width: 16px;
    height: 54px;
    margin: 5px 0 auto;
    background: #cdcdcd;
}

.row-bar {
    display: flex;
    align-items: center;
    gap: 8px;
    height: 30px;
    margin-right: 4px;
    padding: 0 9px 0 6px;
    border: 1px solid #5c6166;
    border-left: none;
    border-top: none;
    background: #bfdbff;
}

.row-menu {
    display: flex;
    align-items: center;
    gap: 6px;
    font: 12px "Segoe UI", Roboto, sans-serif;
    white-space: nowrap;
}

.row-menu::after {
    content: "";
    border: 3px solid transparent;
    border-top-color: #000;
    border-bottom: none;
}

.total {
    margin-left: auto;
    font-weight: bold;
    white-space: nowrap;
    color: #000;
}

.output-options {
    display: flex;
    align-items: flex-start;
    gap: 8px;
    padding: 7px 0 5px 6px;
}

.clip-type {
    width: 249px;
}

.clip-row {
    display: flex;
    align-items: center;
    justify-content: space-between;
    height: 40px;
    padding: 0 3px 6px 9px;
}

.dpi {
    width: 85px;
}

.dpi .select-wrap {
    margin: 6px 5px 18px 8px;
}

.advance-btn {
    justify-content: flex-start;
    gap: 4px;
    height: 29px;
    margin-right: 4px;
    padding-left: 22px;
}

.output-buttons {
    display: grid;
    grid-template-columns: repeat(4, 1fr);
    gap: 15px;
    margin-right: 4px;
    padding: 11px 12px 8px 8px;
    background: #e1ecfb;
}

.out-btn {
    flex-direction: column;
    height: 58px;
    font-weight: bold;
    color: #000;
}

.scroll-h {
    display: flex;
    align-items: center;
    height: 16px;
    margin: 16px 4px 0 0;
    padding: 0 5px;
    background: #f0f0f0;
}

.scroll-h .thumb {
    flex: 1;
    height: 16px;
    margin: 0 36px 0 6px;
    background: #cdcdcd;
}
```

FILE: barcode.js
```js
// EAN-13 bars for the label preview
const L = ["0001101", "0011001", "0010011", "0111101", "0100011", "0110001", "0101111", "0111011", "0110111", "0001011"];
const PARITY = ["LLLLLL", "LLGLGG", "LLGGLG", "LLGGGL", "LGLLGG", "LGGLLG", "LGGGLL", "LGLGLG", "LGLGGL", "LGGLGL"];

function invert(bits) {
    return bits.split("").map(b => b === "1" ? "0" : "1").join("");
}

function encode(code) {
    const parity = PARITY[code[0]];
    let bits = "101";
    for (let i = 1; i <= 6; i++) {
        const l = L[code[i]];
        bits += parity[i - 1] === "L" ? l : invert(l).split("").reverse().join("");
    }
    bits += "01010";
    for (let i = 7; i <= 12; i++) {
        bits += invert(L[code[i]]);
    }
    return bits + "101";
}

const svg = document.getElementById("barcode");
const path = document.createElementNS("http://www.w3.org/2000/svg", "path");
let d = "";

encode("8525987414876").split("").forEach((bit, i) => {
    const guard = i < 3 || i > 91 || (i > 44 && i < 50);
    if (bit === "1") {
        d += `M${i * 2} 0h2v${guard ? 80 : 68}h-2z`;
    }
});

path.setAttribute("d", d);
svg.appendChild(path);
```
